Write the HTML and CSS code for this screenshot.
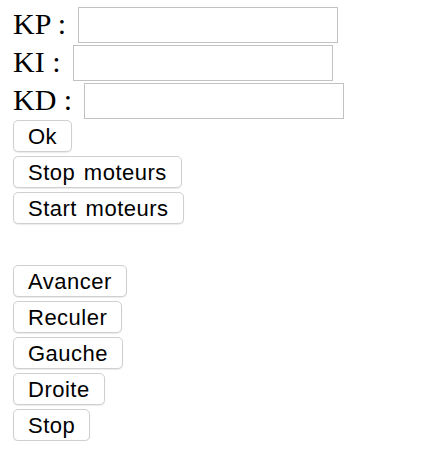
FILE: index.html
```html
<!DOCTYPE html>
<html lang="fr">
<head>
<meta charset="utf-8">
<title>PID</title>
<link rel="stylesheet" href="styles.css">
</head>
<body>
<div class="page">
  <div class="params">
    <div class="row"><span class="label">KP :</span><input class="field" type="text"></div>
    <div class="row"><span class="label">KI :</span><input class="field" type="text"></div>
    <div class="row"><span class="label">KD :</span><input class="field" type="text"></div>
  </div>
  <div class="buttons">
    <button class="btn">Ok</button>
    <button class="btn">Stop moteurs</button>
    <button class="btn">Start moteurs</button>
    <div class="spacer"></div>
    <button class="btn">Avancer</button>
    <button class="btn">Reculer</button>
    <button class="btn">Gauche</button>
    <button class="btn">Droite</button>
    <button class="btn">Stop</button>
  </div>
</div>
</body>
</html>
```

FILE: styles.css
```css
html, body {
  margin: 0;
  padding: 0;
  background: #ffffff;
}

.page {
  padding: 6px 0 0 13px;
}

.params {
  display: flex;
  flex-direction: column;
}

.row {
  display: flex;
  align-items: center;
  height: 38px;
}

.label {
  font-family: "Liberation Serif", "Times New Roman", serif;
  font-size: 30px;
  color: #000;
  margin-bottom: 3px;
}

.field {
  box-sizing: border-box;
  width: 260px;
  height: 36px;
  margin: 0 0 0 12px;
  border: 1px solid #c2c2c2;
  background: #fff;
  padding: 0 4px;
  outline: none;
}

.buttons {
  display: flex;
  flex-direction: column;
  align-items: flex-start;
  gap: 4px;
}

.spacer {
  height: 33px;
}

.btn {
  box-sizing: border-box;
  height: 32px;
  padding: 2px 14px 0;
  margin: 0;
  font-family: "Liberation Sans", Arial, sans-serif;
  font-size: 22px;
  letter-spacing: 0.5px;
  word-spacing: 2px;
  color: #000;
  background: #fff;
  border: 1px solid #cfcfcf;
  border-radius: 5px;
  box-shadow: 0 1px 1px rgba(0, 0, 0, 0.08);
  cursor: pointer;
}
```
